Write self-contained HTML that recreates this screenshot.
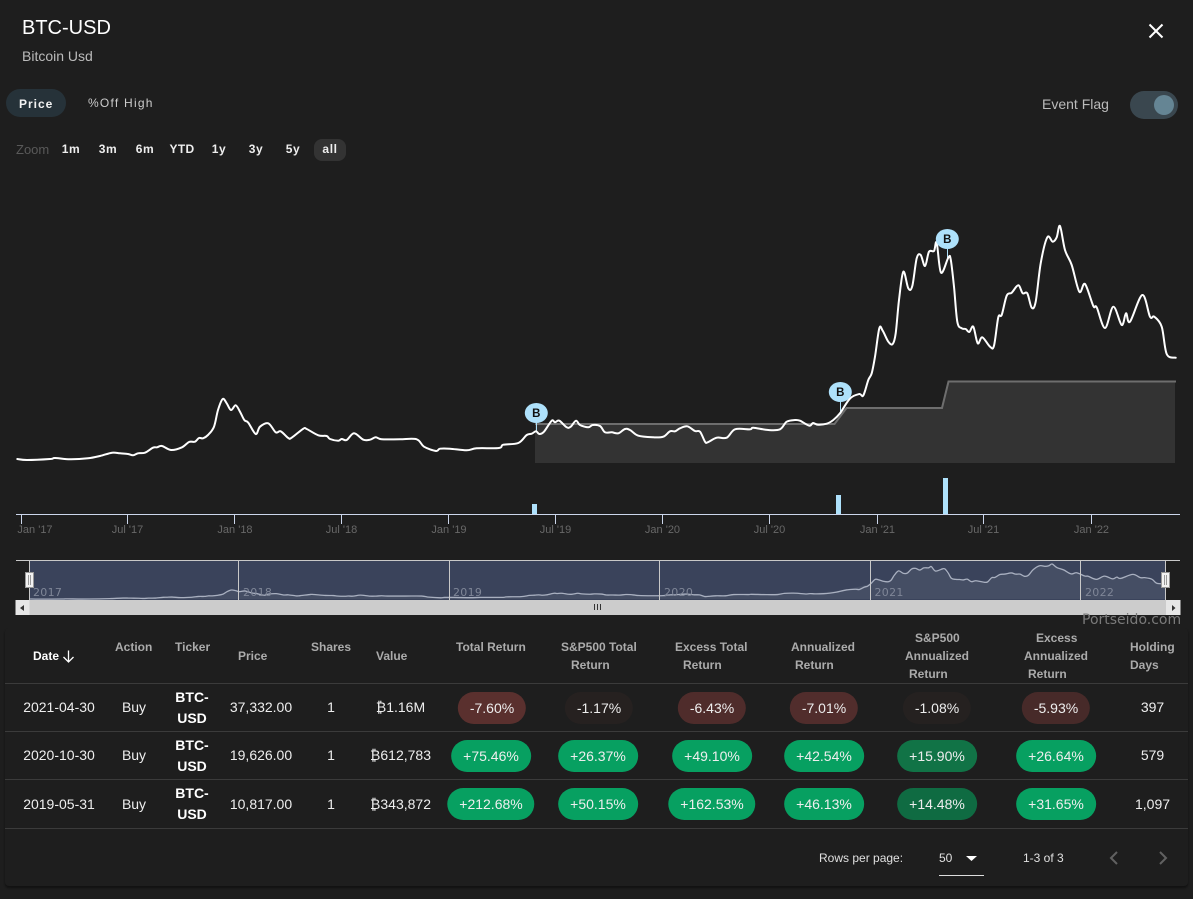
<!DOCTYPE html>
<html><head><meta charset="utf-8"><title>BTC-USD</title>
<style>
html,body{margin:0;padding:0;background:#1e1e1e}
#r{position:relative;width:1193px;height:899px;overflow:hidden;background:#1e1e1e;font-family:"Liberation Sans",sans-serif;color:#fff}
#r div,#r span.a{position:absolute;white-space:nowrap}
.h{font-size:12px;font-weight:bold;color:#ababab;line-height:14px}
.c{font-size:14px;line-height:20px;color:#eee;transform:translateX(-50%)}
.t{font-size:14px;line-height:21px;font-weight:bold;color:#fff;text-align:center;width:60px}
.p{height:32px;line-height:33px;padding:0 12px;border-radius:16px;font-size:14px;color:#eee;transform:translateX(-50%)}
.g{background:#07a061}
.z{font-size:12px;font-weight:bold;letter-spacing:.6px;color:#eee;line-height:14px;top:142px;transform:translateX(-50%)}
.l{position:absolute;left:5px;width:1183px;height:1px;background:#3b3b3b}
</style></head><body><div id="r">

<div style="left:22px;top:16px;font-size:20px;line-height:24px;color:#fff">BTC-USD</div>
<div style="left:22px;top:47px;font-size:14px;line-height:18px;color:#bbb">Bitcoin Usd</div>
<svg style="position:absolute;left:1146px;top:21px" width="20" height="20" viewBox="0 0 20 20"><path d="M3.5 3.5L16.5 16.5M16.5 3.5L3.5 16.5" stroke="#fff" stroke-width="2" fill="none"/></svg>

<div style="left:6px;top:89px;width:60px;height:28px;border-radius:14px;background:#263239"></div>
<div style="left:19px;top:97px;font-size:12px;font-weight:bold;letter-spacing:1px;line-height:14px;color:#f2f2f2">Price</div>
<div style="left:88px;top:96px;font-size:12px;letter-spacing:1.25px;line-height:14px;color:#ccc">%Off High</div>

<div style="left:1042px;top:96px;font-size:14px;line-height:17px;color:#bbb">Event Flag</div>
<div style="left:1130px;top:91px;width:48px;height:28px;border-radius:14px;background:#3a474f"></div>
<div style="left:1154px;top:95px;width:20px;height:20px;border-radius:50%;background:#658594"></div>

<div style="left:16px;top:143px;font-size:13px;line-height:14px;color:#595959">Zoom</div>
<div style="left:314px;top:139px;width:32px;height:22px;border-radius:8px;background:#333"></div>
<div class="z" style="left:71px">1m</div>
<div class="z" style="left:108px">3m</div>
<div class="z" style="left:145px">6m</div>
<div class="z" style="left:182px;letter-spacing:.3px">YTD</div>
<div class="z" style="left:219px">1y</div>
<div class="z" style="left:256px">3y</div>
<div class="z" style="left:293px">5y</div>
<div class="z" style="left:330px">all</div>

<svg style="position:absolute;left:0;top:0" width="1193" height="625" viewBox="0 0 1193 625">
<defs>
<polyline id="pl" fill="none" vector-effect="non-scaling-stroke" stroke-linejoin="round" stroke-linecap="round" points="17.300,459 27,460 50,459 55,458 70,459.300 88,458.300 100,456 112,452.700 120,453.300 128,454 133,455.300 138,453.300 145,452.700 153,447.700 157,447.300 162,446 171,450 182,447.300 189,442 195,441.700 199,438 203,438.300 208,435 214,426.700 218,410 222.700,399 226.700,403.300 231,410 235.700,405.300 240,411.700 244.300,420 248.300,422.700 255.700,434 260,426.700 268.300,423.300 275.700,432.300 280.700,431.300 288.300,438 291.700,437.700 303.300,428.700 306.700,429 318.300,435.300 326.700,436 330,439 338.300,440.700 341.700,439 346.700,440 354,433.300 363.300,439.700 370,439.700 375.700,437.300 381.700,439.300 400,439.300 416.700,439.300 424,446.700 436,451 440,448.700 450,448.700 466.700,450.300 476.700,448.300 499,448 503.300,444.700 518.300,443 526.700,435 531.700,433.700 536,431.300 539.300,434 544,431.700 551.700,420.700 555,422.300 559.300,420.700 566.700,427.300 570.700,426.700 576,420.700 580,425 588.300,427.300 592.700,425 600,426 605,432.300 611.700,432.300 618.300,433.300 625,429 630,430 638.300,435.700 653.300,437.300 663.300,436.700 670,431.300 675,431.300 680,428.300 687.300,426.300 695,431 700,431.700 705,441.700 707.700,442.300 716.700,437.700 726.700,437.700 735,429.300 750,429.300 753.300,427.700 768.300,430 780,429.300 786.700,421.700 795,420 800,420.700 809.300,425.700 813,423 818,424.700 826.700,423.700 833.300,420 840,413.300 850,398.500 859.300,394 863.300,395.500 868.300,380 871.700,373.300 875,356.700 879.300,328.300 882.700,330.700 888.300,341.700 892.700,344 895.700,333.300 899,300 903.300,271.700 908.300,288.300 912.300,286 916.700,258.300 920.700,255 925,266 929,251.700 934,251 936.700,242.700 941,272.700 948.300,257.700 950.700,259.300 954,286.700 957.300,321.700 961.700,328.300 965.700,329 969.300,332 973.300,326.700 977.700,343.300 982.300,337.300 990,346.700 994,345.700 998.300,317.300 1001.700,315 1006.700,295.700 1011.700,292.700 1018.300,285.300 1022.700,293.300 1027.300,293.300 1031.700,307.700 1035.700,301.700 1040.700,263.300 1047.300,237.300 1052.700,241.700 1056.700,237.300 1060,226 1065,250 1071.700,265 1079.300,291.700 1085,284 1093.300,306 1096.700,307.300 1105,328 1113.300,306.700 1121.700,325 1126,313.300 1130,321.700 1142.300,295 1150,316.700 1154.300,316.700 1161.700,326.700 1166.700,354 1175.700,357.700"/>
</defs>
<!-- step area -->
<path d="M535 424H834L847 408H942L949 381.5H1175V463H535Z" fill="#333"/>
<path d="M535 424H834.500L846.500 408H942L948.500 381.500H1176" fill="none" stroke="#6e6e6e" stroke-width="2"/>
<!-- flag stems -->
<path d="M536.500 420V432M840.500 400V414M947.500 248V259" stroke="#aee1fb" stroke-width="1" fill="none"/>
<!-- price line -->
<use href="#pl" stroke="#fff" stroke-width="2"/>
<!-- flags -->
<g fill="#aee1fb">
<ellipse cx="536.300" cy="413" rx="11.500" ry="10"/>
<ellipse cx="840.300" cy="392" rx="11.500" ry="10"/>
<ellipse cx="947.300" cy="239" rx="11.500" ry="10"/>
</g>
<g font-family="'Liberation Sans',sans-serif" font-size="11.500" font-weight="bold" fill="#111" text-anchor="middle">
<text x="536.300" y="417">B</text>
<text x="840.300" y="396">B</text>
<text x="947.300" y="243">B</text>
</g>
<!-- volume -->
<g fill="#aee1fb">
<rect x="532" y="504" width="5" height="10"/>
<rect x="836" y="495" width="5" height="19"/>
<rect x="943" y="478" width="5" height="36"/>
</g>
<!-- x axis -->
<path d="M16 514.500H1180M21.500 514V524M127.500 514V524M234.500 514V524M341.500 514V524M448.500 514V524M555.500 514V524M662.500 514V524M769.500 514V524M877.500 514V524M983.500 514V524M1091.500 514V524" stroke="#ccd6eb" stroke-width="1" fill="none"/>
<g font-family="'Liberation Sans',sans-serif" font-size="11" fill="#686868" text-anchor="middle">
<text x="35" y="533">Jan '17</text>
<text x="127.500" y="533">Jul '17</text>
<text x="235" y="533">Jan '18</text>
<text x="341.500" y="533">Jul '18</text>
<text x="449" y="533">Jan '19</text>
<text x="555.500" y="533">Jul '19</text>
<text x="662.500" y="533">Jan '20</text>
<text x="769.500" y="533">Jul '20</text>
<text x="877.500" y="533">Jan '21</text>
<text x="983.500" y="533">Jul '21</text>
<text x="1091.500" y="533">Jan '22</text>
</g>
<!-- navigator -->
<rect x="29.500" y="560" width="1136" height="40" fill="#3a435b"/>
<g transform="matrix(.98 0 0 .15 13.340 530.150)">
<polygon fill="#fff" fill-opacity=".06" points="17.300,459 50,459 70,459.300 100,456 112,452.700 133,455.300 153,447.700 171,450 195,441.700 214,426.700 222.700,399 231,410 235.700,405.300 255.700,434 268.300,423.300 288.300,438 303.300,428.700 330,439 400,439.300 436,451 499,448 536,431.300 551.700,420.700 600,426 638.300,435.700 700,431.700 707.700,442.300 735,429.300 786.700,421.700 813,423 850,398.500 875,356.700 879.300,328.300 892.700,344 903.300,271.700 908.300,288.300 916.700,258.300 925,266 936.700,242.700 941,272.700 948.300,257.700 957.300,321.700 990,346.700 1006.700,295.700 1027.300,293.300 1031.700,307.700 1047.300,237.300 1060,226 1079.300,291.700 1085,284 1105,328 1113.300,306.700 1121.700,325 1142.300,295 1166.700,354 1175.700,357.700 1175.700,459"/>
<use href="#pl" stroke="#a9b0c0" stroke-width="1.300"/>
</g>
<path d="M238.500 560V600M449.500 560V600M659.500 560V600M870.500 560V600M1080.500 560V600M29.500 560V600M1165.500 560V600" stroke="#c8c8c8" stroke-width="1" fill="none"/>
<path d="M16 560.500H1180" stroke="#c8c8c8" stroke-width="1" fill="none"/>
<g font-family="'DejaVu Sans',sans-serif" font-size="11" letter-spacing=".3" fill="#7f8697">
<text x="33" y="596">2017</text>
<text x="243" y="596">2018</text>
<text x="453" y="596">2019</text>
<text x="664" y="596">2020</text>
<text x="874.500" y="596">2021</text>
<text x="1085" y="596">2022</text>
</g>
<!-- scrollbar -->
<rect x="15.500" y="600" width="1165" height="15" fill="#ccc"/>
<rect x="15.500" y="600" width="14" height="15" fill="#e6e6e6"/>
<rect x="1166" y="600" width="14.500" height="15" fill="#e6e6e6"/>
<path d="M20 608L24 605V611ZM1175.500 608L1172 605V611Z" fill="#333"/>
<path d="M594.500 604V610M597.500 604V610M600.500 604V610" stroke="#333" stroke-width="1" fill="none"/>
<!-- handles -->
<g fill="#f2f2f2" stroke="#999" stroke-width="1">
<rect x="25.500" y="572.500" width="8" height="15"/>
<rect x="1161.500" y="572.500" width="8" height="15"/>
<path d="M28.500 575V585M30.500 575V585M1164.500 575V585M1166.500 575V585" fill="none"/>
</g>
</svg>

<div style="left:5px;top:628px;width:1183px;height:258px;border-radius:4px;background:#1e1e1e;box-shadow:0 2px 2px rgba(0,0,0,.45)"></div>
<div style="left:1082px;top:612px;font-family:'DejaVu Sans',sans-serif;font-size:14px;line-height:16px;color:#7a7a7a">Portseido.com</div>

<!-- header -->
<div class="h" style="left:33px;top:649px;color:#fff">Date</div>
<svg style="position:absolute;left:61px;top:649px" width="15" height="15" viewBox="0 0 15 15"><path d="M7.500 1.500V13M2.500 8L7.500 13L12.500 8" stroke="#fff" stroke-width="1.300" fill="none"/></svg>
<div class="h" style="left:115px;top:640px">Action</div>
<div class="h" style="left:175px;top:640px">Ticker</div>
<div class="h" style="left:238px;top:649px">Price</div>
<div class="h" style="left:311px;top:640px">Shares</div>
<div class="h" style="left:376px;top:649px">Value</div>
<div class="h" style="left:456px;top:640px">Total Return</div>
<div class="h" style="left:561px;top:640px">S&amp;P500 Total</div>
<div class="h" style="left:571px;top:658px">Return</div>
<div class="h" style="left:675px;top:640px">Excess Total</div>
<div class="h" style="left:683px;top:658px">Return</div>
<div class="h" style="left:791px;top:640px">Annualized</div>
<div class="h" style="left:795px;top:658px">Return</div>
<div class="h" style="left:915px;top:631px">S&amp;P500</div>
<div class="h" style="left:905px;top:649px">Annualized</div>
<div class="h" style="left:909px;top:667px">Return</div>
<div class="h" style="left:1036px;top:631px">Excess</div>
<div class="h" style="left:1024px;top:649px">Annualized</div>
<div class="h" style="left:1028px;top:667px">Return</div>
<div class="h" style="left:1130px;top:640px">Holding</div>
<div class="h" style="left:1130px;top:658px">Days</div>

<div class="l" style="top:683px"></div>
<div class="l" style="top:731px"></div>
<div class="l" style="top:779px"></div>
<div class="l" style="top:828px"></div>

<!-- row 1 -->
<div class="c" style="left:59px;top:697px">2021-04-30</div>
<div class="c" style="left:134px;top:697px">Buy</div>
<div class="t" style="left:162px;top:687px">BTC-<br>USD</div>
<div class="c" style="left:261px;top:697px">37,332.00</div>
<div class="c" style="left:331px;top:697px">1</div>
<div class="c" style="left:400.500px;top:697px">₿1.16M</div>
<div class="p" style="left:492px;top:692px;background:#5a302e">-7.60%</div>
<div class="p" style="left:599px;top:692px;background:#262120">-1.17%</div>
<div class="p" style="left:712px;top:692px;background:#4f2c2b">-6.43%</div>
<div class="p" style="left:824px;top:692px;background:#512d2c">-7.01%</div>
<div class="p" style="left:937px;top:692px;background:#252120">-1.08%</div>
<div class="p" style="left:1056px;top:692px;background:#472a29">-5.93%</div>
<div class="c" style="left:1152.500px;top:697px">397</div>

<!-- row 2 -->
<div class="c" style="left:59px;top:745px">2020-10-30</div>
<div class="c" style="left:134px;top:745px">Buy</div>
<div class="t" style="left:162px;top:735px">BTC-<br>USD</div>
<div class="c" style="left:261px;top:745px">19,626.00</div>
<div class="c" style="left:331px;top:745px">1</div>
<div class="c" style="left:400.500px;top:745px">₿612,783</div>
<div class="p g" style="left:491px;top:740px">+75.46%</div>
<div class="p g" style="left:598px;top:740px">+26.37%</div>
<div class="p g" style="left:712px;top:740px">+49.10%</div>
<div class="p g" style="left:824px;top:740px">+42.54%</div>
<div class="p" style="left:937px;top:740px;background:#117346">+15.90%</div>
<div class="p g" style="left:1056px;top:740px">+26.64%</div>
<div class="c" style="left:1152.500px;top:745px">579</div>

<!-- row 3 -->
<div class="c" style="left:59px;top:794px">2019-05-31</div>
<div class="c" style="left:134px;top:794px">Buy</div>
<div class="t" style="left:162px;top:783px">BTC-<br>USD</div>
<div class="c" style="left:261px;top:794px">10,817.00</div>
<div class="c" style="left:331px;top:794px">1</div>
<div class="c" style="left:400.500px;top:794px">₿343,872</div>
<div class="p g" style="left:491px;top:788px">+212.68%</div>
<div class="p g" style="left:598px;top:788px">+50.15%</div>
<div class="p g" style="left:712px;top:788px">+162.53%</div>
<div class="p g" style="left:824px;top:788px">+46.13%</div>
<div class="p" style="left:937px;top:788px;background:#0f6b42">+14.48%</div>
<div class="p g" style="left:1056px;top:788px">+31.65%</div>
<div class="c" style="left:1152.500px;top:794px">1,097</div>

<!-- pagination -->
<div style="left:819px;top:850px;font-size:12px;line-height:16px;color:#e0e0e0">Rows per page:</div>
<div style="left:939px;top:850px;font-size:12px;line-height:16px;color:#e0e0e0">50</div>
<svg style="position:absolute;left:965px;top:855px" width="13" height="7" viewBox="0 0 13 7"><path d="M1 1H12L6.500 6Z" fill="#fff"/></svg>
<div style="left:939px;top:875px;width:45px;height:1px;background:#ddd"></div>
<div style="left:1023px;top:850px;font-size:12px;line-height:16px;color:#e0e0e0">1-3 of 3</div>
<svg style="position:absolute;left:1106px;top:849px" width="16" height="18" viewBox="0 0 16 18"><path d="M11 3L5 9L11 15" stroke="#616161" stroke-width="2" fill="none"/></svg>
<svg style="position:absolute;left:1155px;top:849px" width="16" height="18" viewBox="0 0 16 18"><path d="M5 3L11 9L5 15" stroke="#616161" stroke-width="2" fill="none"/></svg>

</div>
<script>
(function(){
var o=document.getElementById('pl'),s=o.getAttribute('points').trim().split(/\s+/).map(function(a){return a.split(',').map(Number)});
var d='M'+s[0][0]+' '+s[0][1];
for(var i=0;i<s.length-1;i++){
var a=s[Math.max(i-1,0)],b=s[i],c=s[i+1],e=s[Math.min(i+2,s.length-1)];
d+='C'+(b[0]+(c[0]-a[0])/6).toFixed(2)+' '+(b[1]+(c[1]-a[1])/6).toFixed(2)+' '+(c[0]-(e[0]-b[0])/6).toFixed(2)+' '+(c[1]-(e[1]-b[1])/6).toFixed(2)+' '+c[0]+' '+c[1];
}
var p=document.createElementNS('http://www.w3.org/2000/svg','path');
p.setAttribute('d',d);p.setAttribute('fill','none');p.setAttribute('vector-effect','non-scaling-stroke');
p.setAttribute('stroke-linejoin','round');p.setAttribute('stroke-linecap','round');
o.parentNode.replaceChild(p,o);p.setAttribute('id','pl');
})();
</script>
</body></html>
